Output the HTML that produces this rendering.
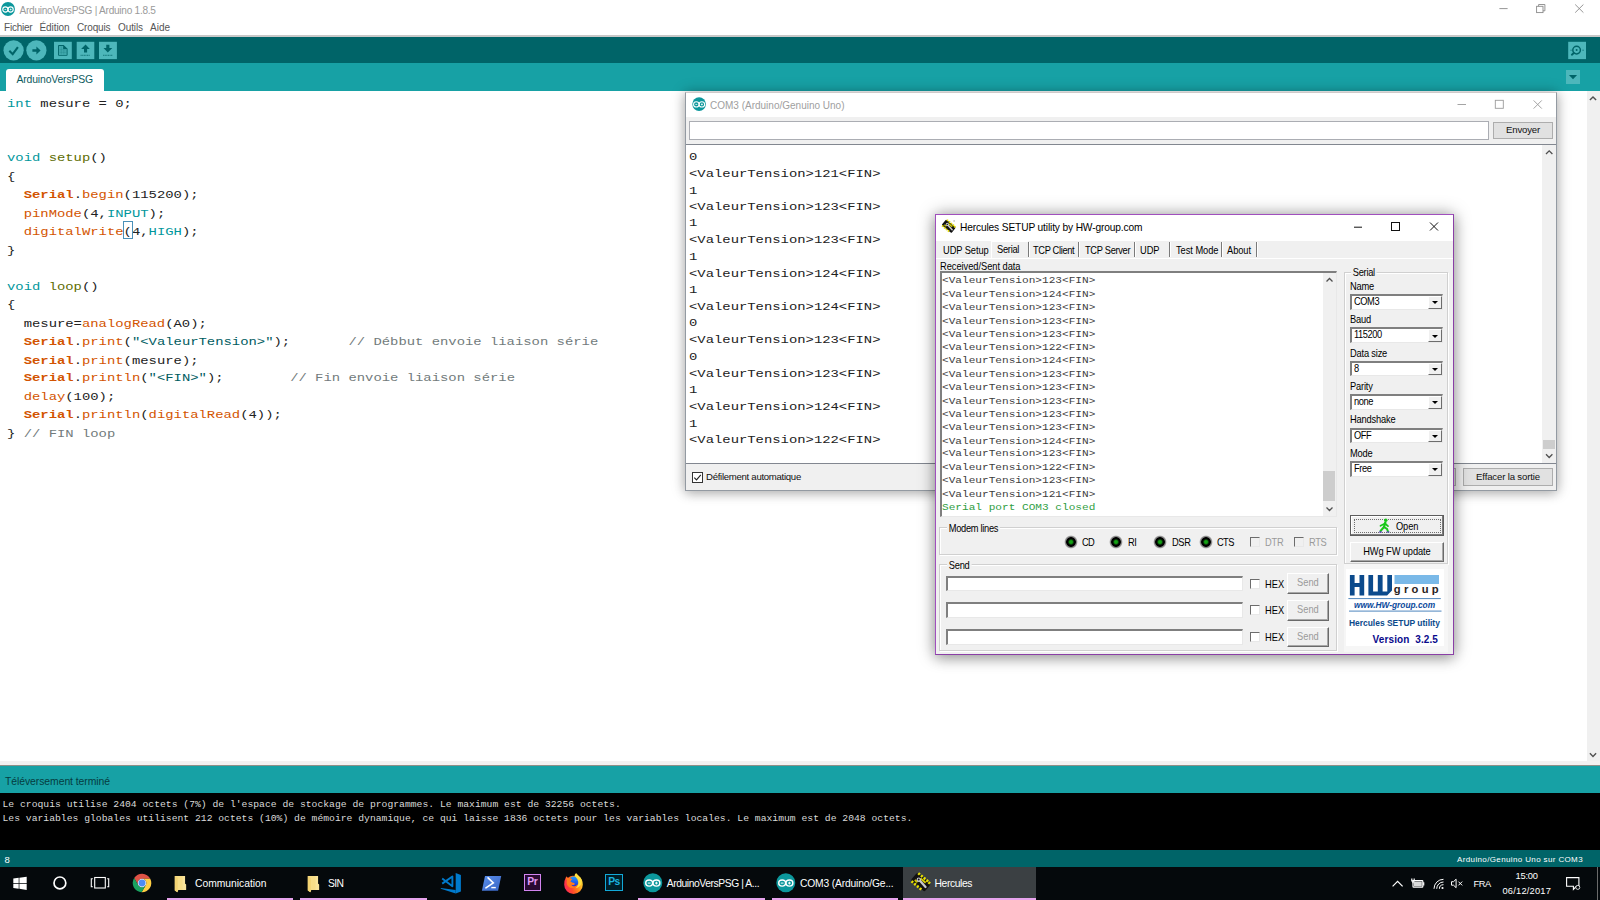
<!DOCTYPE html>
<html lang="fr">
<head>
<meta charset="utf-8">
<title>ArduinoVersPSG | Arduino 1.8.5</title>
<style>
*{box-sizing:border-box;margin:0;padding:0}
html,body{width:1600px;height:900px;overflow:hidden;background:#fff}
body{position:relative;font-family:"Liberation Sans",sans-serif;font-size:12px;color:#000}
.abs{position:absolute}
.ui{font-family:"Liberation Sans",sans-serif}
.mono{font-family:"Liberation Mono",monospace}
/* ---------- Arduino main window ---------- */
#titlebar{left:0;top:0;width:1600px;height:20px;background:#fff}
#titletext{left:19.500px;top:3.500px;font-size:10.100px;line-height:14px;color:#9a9a9a;white-space:nowrap;letter-spacing:-.26px}
#menubar{left:0;top:20px;width:1600px;height:15px;background:#fff;font-size:10px;color:#555;white-space:nowrap}
#menubar span{position:absolute;top:0;line-height:15px}
#menuline{left:0;top:35px;width:1600px;height:2px;background:#c8c8c8}
#toolbar{left:0;top:37px;width:1600px;height:26px;background:#006468}
#tabbar{left:0;top:63px;width:1600px;height:28px;background:#17a1a5}
#tab{left:6px;top:68.500px;width:98px;height:22.500px;background:#fff;border-radius:3px 3px 0 0}
#tabtext{left:16.500px;top:72.500px;letter-spacing:-.15px;font-size:10.400px;line-height:14px;color:#0b5a5e;white-space:nowrap}
#editor{left:0;top:91px;width:1587px;height:674px;background:#fff}
#code{left:7px;top:94.8px;font-size:13.89px;line-height:21.825px;white-space:pre;color:#222;transform:scaleY(.84);transform-origin:0 0}
#vscroll{left:1587px;top:91px;width:13px;height:670px;background:#f0f0f0}
#edline{left:0;top:761px;width:1600px;height:5px;background:#f3f1f1;border-bottom:1px solid #8f8f88}
#status{left:0;top:766px;width:1600px;height:27px;background:#17a1a5}
#statustext{left:5px;top:775px;letter-spacing:-.06px;color:#053c40;font-size:10.400px;line-height:14px;white-space:nowrap}
#console{left:0;top:793px;width:1600px;height:57px;background:#000}
#context{left:2.5px;top:798.600px;color:#dadada;font-size:9.72px;line-height:16.37px;white-space:pre;transform:scaleY(.84);transform-origin:0 0}
#linebar{left:0;top:850px;width:1600px;height:17px;background:#006468;color:#fff;font-size:9px}
#taskbar{left:0;top:867px;width:1600px;height:33px;background:#05090c;color:#fff}
.k{color:#00979c}.f{color:#5e6d03}.o{color:#d35400}.ob{color:#d35400;font-weight:bold}.s{color:#005c5f}.c{color:#727b7c}

/* ---------- COM3 serial monitor ---------- */
#com{left:685px;top:92px;width:872px;height:398.500px;background:#f0f0f0;border:1px solid #939aa2;border-top-color:#cfc9c9;box-shadow:0 0 13px rgba(0,0,0,.27),0 3px 10px rgba(0,0,0,.15)}
#comtitle{left:686px;top:93px;width:870px;height:24px;background:#fff}
#comtitletext{left:710px;top:99px;font-size:10px;line-height:14px;color:#a0a0a0;white-space:nowrap}
#cominput{left:689px;top:121px;width:800px;height:19px;background:#fff;border:1px solid #abadb3}
.wbtn{background:#e1e1e1;border:1px solid #adadad;font-size:9.600px;text-align:center;color:#111;white-space:nowrap}
#comsend{left:1493px;top:122px;width:60px;height:17px;line-height:14px;letter-spacing:-.2px}
#comout{left:686px;top:144px;width:870px;height:320px;background:#fff;border-top:1px solid #828790;border-bottom:1px solid #828790}
#comtext{left:689px;top:148.600px;font-size:13.89px;line-height:19.841px;white-space:pre;color:#222;transform:scaleY(.84);transform-origin:0 0}
#comscroll{left:1542px;top:145px;width:14px;height:318px;background:#f0f0f0}
#comthumb{left:1543px;top:440px;width:12px;height:9px;background:#cdcdcd}
#comcheck{left:692.200px;top:471.500px;width:11px;height:11px;background:#fff;border:1px solid #333}
#comchecklbl{left:706px;top:470.300px;font-size:9.600px;letter-spacing:-.29px;line-height:13px;color:#111;white-space:nowrap}
#comclear{left:1463px;top:468px;width:90px;height:18px;line-height:16px;letter-spacing:-.16px}

/* ---------- Hercules ---------- */
#herc{left:935px;top:214px;width:519px;height:441px;background:#f0f0f0;border:1px solid #a04fbd;border-bottom-color:#8a3fa6;border-right-color:#8a3fa6;box-shadow:0 0 16px rgba(0,0,0,.35),0 4px 12px rgba(0,0,0,.2)}
#hertitle{left:936px;top:215px;width:517px;height:25.500px;background:#fff}
#hertitletext{left:960px;top:220.700px;font-size:10.200px;line-height:14px;color:#000;white-space:nowrap;letter-spacing:-.14px}
.h{font-size:9.300px;line-height:12px;color:#000;white-space:nowrap}
.h:not(.hbtn):not(.combo){font-size:10.200px;transform:translateY(.6px) scaleX(.912);transform-origin:0 50%}
.combo span{font-size:10.200px;transform:scaleX(.912);transform-origin:0 50%}
.bx{display:inline-block;font-size:10.200px;transform:scaleX(.912);transform-origin:50% 50%}
.hg{color:#9a9a9a}
.cl{letter-spacing:-.2px}
.sep{width:2px;height:15px;top:242px;background:#7a7a7a;border-right:1px solid #fff}
.grp{border:1px solid #d0d0d0;box-shadow:inset 1px 1px 0 #fff, 1px 1px 0 #fff}
.grplbl{background:#f0f0f0;padding:0 2px}
.sunk{background:#fff;border-top:2px solid #7f7f7f;border-left:2px solid #7f7f7f;border-right:1px solid #e8e8e8;border-bottom:1px solid #e8e8e8}
.combo{left:1350px;width:93px;height:15.500px}
.combo span{position:absolute;left:1.500px;top:0;line-height:12.500px;letter-spacing:-.45px}
.combo i{position:absolute;right:0;top:0;width:14px;height:12.500px;background:#f0f0f0;border-right:1px solid #6d6d6d;border-bottom:1px solid #6d6d6d;border-left:1px solid #fff;border-top:1px solid #fff}
.combo i:after{content:"";position:absolute;left:2.700px;top:4.300px;border:3.500px solid transparent;border-top:3.800px solid #000;border-bottom:0}
.hbtn{background:#f0f0f0;border-top:1px solid #fff;border-left:1px solid #fff;border-right:1.500px solid #6a6a6a;border-bottom:1.500px solid #6a6a6a;text-align:center;box-shadow:inset -1px -1px 0 #a8a8a8}
.hchk{width:10px;height:10px;background:#fff;border-top:1.500px solid #6c6c6c;border-left:1.500px solid #6c6c6c;border-right:1px solid #e8e8e8;border-bottom:1px solid #e8e8e8}
.led{width:14px;height:14px;border-radius:50%;background:radial-gradient(circle closest-side,#19b019 0,#109010 24%,#0a3a0a 36%,#000 46%,#000 64%,#6e6e6e 72%,#9c9c9c 84%,rgba(200,200,200,.5) 94%,rgba(240,240,240,0) 100%)}
#hertext{left:942px;top:275.300px;font-size:11.11px;line-height:15.873px;white-space:pre;color:#404040;transform:scaleY(.84);transform-origin:0 0}

/* ---------- taskbar ---------- */
.tb{font-size:10.300px;line-height:14px;color:#fff;white-space:nowrap}
.ul{top:898.300px;height:2px;background:#e6a3ec}
</style>
</head>
<body>
<!-- Arduino main window -->
<div id="titlebar" class="abs"></div>
<div id="titletext" class="abs">ArduinoVersPSG | Arduino 1.8.5</div>
<div id="menubar" class="abs"><span style="left:4px;letter-spacing:-.22px">Fichier</span><span style="left:39.500px;letter-spacing:-.08px">Édition</span><span style="left:77px;letter-spacing:-.14px">Croquis</span><span style="left:118px;letter-spacing:-.09px">Outils</span><span style="left:150px">Aide</span></div>
<div id="menuline" class="abs"></div>
<div id="toolbar" class="abs"></div>
<div id="tabbar" class="abs"></div>
<svg class="abs" style="left:0;top:37px" width="130" height="26" viewBox="0 37 130 26">
<g fill="#4db7bb">
<circle cx="13.600" cy="50.300" r="10.100"/><circle cx="36.400" cy="50.300" r="10.100"/>
<rect x="54" y="41.8" width="17.8" height="17.3"/><rect x="76.7" y="41.8" width="17.6" height="17.3"/><rect x="99" y="41.8" width="17.9" height="17.3"/>
</g>
<g fill="none" stroke="#006468">
<path d="M9.300 50.700 L12.700 54.200 L17.900 47.100" stroke-width="2.100"/>
</g>
<g fill="#006468">
<path d="M32.400 49.200 H36.400 V46.400 L40.600 50.500 L36.400 54.600 V51.800 H32.400 Z"/>
<path d="M58.100 45.700 q0-.7.700-.7 H63.600 L67.550 48.700 V55.100 q0 .7-.7.7 H58.800 q-.7 0-.7-.7 Z M59 45.900 V54.900 H66.650 V48.900 H63.400 V45.900 Z" fill-rule="evenodd"/>
<path d="M63.400 45.200 L67.300 48.900 H63.400 Z"/>
<path d="M59 45.900 V54.900 H66.650 V48.900 H63.400 V45.900 Z" opacity=".18"/>
<path d="M59.500 49.700h6.600M59.500 52.300h6.600M61.300 46.500v8M63.800 49.200v5.300" stroke="#006468" stroke-width=".5" opacity=".35" fill="none"/>
<path d="M85.550 44.600 L89.800 48.900 H87.100 V52.400 H84 V48.900 H81.100 Z"/>
<path d="M80.600 55.300 H90" stroke="#006468" stroke-width=".8" stroke-dasharray="1.100 .5" fill="none"/>
<path d="M107.800 52.500 L112.300 48.100 H109.400 V44.700 H106.250 V48.100 H103.500 Z"/>
<path d="M103.100 55.300 H112.800" stroke="#006468" stroke-width=".8" stroke-dasharray="1.100 .5" fill="none"/>
</g>
</svg>
<svg class="abs" style="left:1565px;top:37px" width="35" height="54" viewBox="1565 37 35 54">
<rect x="1568.2" y="41.8" width="17.8" height="17.3" fill="#4db7bb"/>
<rect x="1566" y="70" width="14" height="14" fill="#4db7bb"/>
<path d="M1568.900 74.900 H1577.100 L1573 79.200 Z" fill="#006468"/>
<circle cx="1576.600" cy="50.100" r="3.800" fill="none" stroke="#006468" stroke-width="1.500"/>
<circle cx="1576.600" cy="50.100" r="1" fill="#006468"/>
<path d="M1573.800 53.100 L1571.900 54.700" stroke="#006468" stroke-width="2" stroke-linecap="round"/>
<path d="M1570.400 50.200h1.400M1582.300 50.200h1.600" stroke="#006468" stroke-width=".7"/>
</svg>
<div id="tab" class="abs"></div><div id="tabtext" class="abs">ArduinoVersPSG</div>
<div id="editor" class="abs"></div>
<div id="code" class="abs mono"><span class="k">int</span> mesure = 0;


<span class="k">void</span> <span class="f">setup</span>()
{
  <span class="ob">Serial</span>.<span class="o">begin</span>(115200);
  <span class="o">pinMode</span>(4,<span class="k">INPUT</span>);
  <span class="o">digitalWrite</span>(4,<span class="k">HIGH</span>);
}

<span class="k">void</span> <span class="f">loop</span>()
{
  mesure=<span class="o">analogRead</span>(A0);
  <span class="ob">Serial</span>.<span class="o">print</span>(<span class="s">"&lt;ValeurTension&gt;"</span>);       <span class="c">// Débbut envoie liaison série</span>
  <span class="ob">Serial</span>.<span class="o">print</span>(mesure);
  <span class="ob">Serial</span>.<span class="o">println</span>(<span class="s">"&lt;FIN&gt;"</span>);        <span class="c">// Fin envoie liaison série</span>
  <span class="o">delay</span>(100);
  <span class="ob">Serial</span>.<span class="o">println</span>(<span class="o">digitalRead</span>(4));
} <span class="c">// FIN loop</span></div>
<div class="abs" style="left:123px;top:221px;width:9.600px;height:18px;border:1px solid #4a90b8"></div>
<div id="vscroll" class="abs"></div>
<svg class="abs" style="left:1.100px;top:1.950px" width="14" height="14" viewBox="0 0 20 20"><circle cx="10" cy="10" r="9.900" fill="#0c979c"/><g fill="none" stroke="#fff" stroke-width="1.600"><ellipse cx="6.250" cy="10.700" rx="3.700" ry="3.700"/><ellipse cx="13.750" cy="10.700" rx="3.700" ry="3.700"/></g><path d="M5 10.700h2.500M12.500 10.700h2.500M13.750 9.450v2.500" stroke="#fff" stroke-width="1"/></svg>
<svg class="abs" style="left:1490px;top:0" width="110" height="18" viewBox="1490 0 110 18"><g stroke="#8a8a8a" stroke-width="0.900" fill="none"><path d="M1499.400 8.600h8.200"/><rect x="1536.600" y="6.300" width="6.400" height="6.300"/><path d="M1538.600 6.300v-1.800h6.300v6.300h-1.900"/><path d="M1575.200 4.500l8.200 8.100M1583.400 4.500l-8.200 8.100"/></g></svg>
<svg class="abs" style="left:1587px;top:91px" width="13" height="674" viewBox="0 0 13 674"><g fill="none" stroke="#505050" stroke-width="1.400"><path d="M2.900 9l3.100-3.100L9.100 9"/><path d="M2.900 662.300l3.100 3.100L9.100 662.300"/></g></svg>
<div id="edline" class="abs"></div>
<div id="status" class="abs"></div><div id="statustext" class="abs">Téléversement terminé</div>
<div id="console" class="abs"></div>
<div id="context" class="abs mono">Le croquis utilise 2404 octets (7%) de l'espace de stockage de programmes. Le maximum est de 32256 octets.
Les variables globales utilisent 212 octets (10%) de mémoire dynamique, ce qui laisse 1836 octets pour les variables locales. Le maximum est de 2048 octets.</div>
<div id="linebar" class="abs"><span class="abs" style="left:4.500px;top:4.200px;font-size:9.500px;line-height:11px">8</span><span class="abs" style="left:1457px;top:3.700px;font-size:8px;line-height:11px;letter-spacing:.37px;white-space:nowrap">Arduino/Genuino Uno sur COM3</span></div>
<div id="taskbar" class="abs"></div>
<div class="abs" style="left:903px;top:867px;width:133px;height:31.500px;background:#3b4043"></div>
<div class="abs ul" style="left:167px;width:126px"></div>
<div class="abs ul" style="left:300px;width:127px"></div>
<div class="abs ul" style="left:638.2px;width:126.6px"></div>
<div class="abs ul" style="left:771.6px;width:126.8px"></div>
<div class="abs ul" style="left:902.9px;width:133.1px"></div>
<svg class="abs" style="left:13px;top:876.0px" width="15" height="15" viewBox="0 0 15 15"><g fill="#fff"><path d="M.3 2.600l5.400-.75v5.100H.3zM6.400 1.750L13.700.7v6.250H6.400zM.3 7.650h5.400v5.100L.3 12zM6.400 7.650h7.300v6.250l-7.300-1.050z"/></g></svg>
<svg class="abs" style="left:52px;top:875.0px" width="16" height="16" viewBox="0 0 16 16"><circle cx="7.900" cy="7.900" r="5.900" fill="none" stroke="#fff" stroke-width="1.700"/></svg>
<svg class="abs" style="left:90px;top:876.0px" width="20" height="14" viewBox="0 0 20 14"><g fill="none" stroke="#fff" stroke-width="1.100"><rect x="4.700" y="1.500" width="10.600" height="10.500"/><path d="M2.800 2.800H1.300v8h1.500M17.200 2.800h1.500v8h-1.500"/></g></svg>
<svg class="abs" style="left:132px;top:873.100px" width="20" height="20" viewBox="-10 -10 20 20"><path d="M0 -4.300L8.246 -4.300A9.300 9.300 0 0 0 -7.847 -4.991L-3.724 2.150A4.300 4.300 0 0 1 0 -4.300z" fill="#de5246"/><path d="M3.724 2.150L-.399 9.291A9.300 9.300 0 0 0 8.246 -4.300L0 -4.300A4.300 4.300 0 0 1 3.724 2.150z" fill="#ffce44"/><path d="M-3.724 2.150L-7.847 -4.991A9.300 9.300 0 0 0 -.399 9.291L3.724 2.150A4.300 4.300 0 0 1 -3.724 2.150z" fill="#1aa260"/><circle r="4.300" fill="#f1f1f1"/><circle r="3.450" fill="#4c8bf5"/></svg>
<svg class="abs" style="left:172px;top:874px" width="16" height="21" viewBox="172 874 16 21"><path d="M174.800 876.100H185.050V883.700L186.100 884.500V889.900H178.300L177.400 892.300L174.800 890.600z" fill="#f8de88"/><path d="M174.800 876.100L177.700 877.700V889.900L177.400 892.300L174.800 890.600z" fill="#f3d373"/><path d="M182.500 876.100H185.050V883.700L186.100 884.500V889.900H182.500z" fill="#fbe7a2" opacity=".7"/></svg>
<svg class="abs" style="left:305.2px;top:874px" width="16" height="21" viewBox="172 874 16 21"><path d="M174.800 876.100H185.050V883.700L186.100 884.500V889.900H178.300L177.400 892.300L174.800 890.600z" fill="#f8de88"/><path d="M174.800 876.100L177.700 877.700V889.900L177.400 892.300L174.800 890.600z" fill="#f3d373"/><path d="M182.500 876.100H185.050V883.700L186.100 884.500V889.900H182.500z" fill="#fbe7a2" opacity=".7"/></svg>
<div id="tb1" class="abs tb" style="left:195px;top:877.1px">Communication</div>
<div id="tb2" class="abs tb" style="letter-spacing:-0.66px;left:328px;top:877.1px">SIN</div>
<svg class="abs" style="left:438px;top:871px" width="26" height="25" viewBox="438 871 26 25"><g fill="#007acc"><path d="M455.700 873L460.900 875V891.400L455.700 893.600z"/><path d="M440.800 888.100L455.700 890V893.600L440.800 888.800z"/></g><g fill="none" stroke="#007acc" stroke-width="1.900" stroke-linejoin="round"><path d="M442.200 878.600L452.400 886.200V876.500L442.200 883.600"/></g></svg>
<svg class="abs" style="left:480px;top:874px" width="24" height="19" viewBox="480 874 24 19"><defs><linearGradient id="psg" x1="0" y1="0" x2="1" y2="1"><stop offset="0" stop-color="#5b90ec"/><stop offset="1" stop-color="#3763c4"/></linearGradient></defs><path d="M485 876.100H501.200L498.100 890.750H481.900z" fill="url(#psg)"/><path d="M488.050 877.900L493.300 882.900L485.900 887.900" fill="none" stroke="#fff" stroke-width="1.600" stroke-linecap="round"/><path d="M491.300 887.600h4.500" stroke="#fff" stroke-width="1.400"/></svg>
<div class="abs" style="left:523.500px;top:874.0px;width:17.700px;height:16.600px;background:#2a0a33;border:1.500px solid #d284f0"></div>
<div class="abs" style="left:523.500px;top:875.5px;width:17.700px;text-align:center;font-size:10.300px;line-height:14px;color:#e29af8;letter-spacing:-.3px;font-weight:bold;margin-top:-.5px">Pr</div>
<svg class="abs" style="left:562.800px;top:872.600px" width="21" height="21" viewBox="-10.500 -10.500 21 21"><defs><linearGradient id="ffg" x1="0" y1=".6" x2="1" y2=".2"><stop offset="0" stop-color="#ff2a55"/><stop offset=".3" stop-color="#ff4a2a"/><stop offset=".6" stop-color="#ff8a1a"/><stop offset=".85" stop-color="#ffc82e"/><stop offset="1" stop-color="#ffe84a"/></linearGradient><linearGradient id="ffb" x1="0" y1="0" x2="0" y2="1"><stop offset="0" stop-color="#1e9bff"/><stop offset=".6" stop-color="#1a5cf0"/><stop offset="1" stop-color="#3a2ec0"/></linearGradient></defs><path d="M-7.500 -6.500Q-9.600 -2.500 -9.300 1.200A9.300 9.300 0 0 0 9.300 1.200Q9.300 -4.500 5.500 -7.300Q3.500 -9 2.600 -10.200Q1 -8.800 1.200 -7.600Q-2.500 -8.500 -5.500 -5.800Q-6.800 -6 -7.500 -7.500z" fill="url(#ffg)"/><circle cx=".3" cy="-2" r="5" fill="url(#ffb)"/><path d="M2.600 -10.200Q1 -8.800 1.200 -7.600Q4.300 -5 4.800 -1.500Q5.200 2.500 2 4.800Q6 4 7.800 .5Q9 -4.500 5.500 -7.300Q3.500 -9 2.600 -10.200z" fill="#ffe040"/><path d="M-7.500 -6.500Q-5.500 -5 -3.800 -5.600Q-2 -5 -1.200 -4.200Q-2.600 -3.200 -3 -2Q-1.500 -.6 .8 -.6Q1.800 .4 .6 1.400Q-.8 1.900 -2.300 1.200Q-1 3.400 1.600 3.200Q-1.500 5.600 -4.600 3.600Q-7.500 1 -6.600 -3Q-7.500 -4.500 -7.500 -6.500z" fill="#ff7a1e"/></svg>
<div class="abs" style="left:605.300px;top:874.0px;width:17.500px;height:16.600px;background:#001e28;border:1.500px solid #12a9d8"></div>
<div class="abs" style="left:605.300px;top:875.5px;width:17.500px;text-align:center;font-size:10.300px;line-height:14px;color:#1bb4e0;letter-spacing:-.4px;font-weight:bold;margin-top:-.5px">Ps</div>
<svg class="abs" style="left:643.2px;top:873.2px" width="19.6" height="19.6" viewBox="0 0 20 20"><circle cx="10" cy="10" r="9.700" fill="#0c979c"/><g fill="none" stroke="#fff" stroke-width="1.500"><ellipse cx="6.300" cy="10.300" rx="3.500" ry="3.100"/><ellipse cx="13.700" cy="10.300" rx="3.500" ry="3.100"/></g><path d="M4.900 10.300h2.800M12.300 10.300h2.800M13.700 8.900v2.800" stroke="#fff" stroke-width="1"/></svg>
<svg class="abs" style="left:776.4px;top:873.0px" width="19.6" height="19.6" viewBox="0 0 20 20"><circle cx="10" cy="10" r="9.700" fill="#0c979c"/><g fill="none" stroke="#fff" stroke-width="1.500"><ellipse cx="6.300" cy="10.300" rx="3.500" ry="3.100"/><ellipse cx="13.700" cy="10.300" rx="3.500" ry="3.100"/></g><path d="M4.900 10.300h2.800M12.300 10.300h2.800M13.700 8.900v2.800" stroke="#fff" stroke-width="1"/></svg>
<div id="tb3" class="abs tb" style="letter-spacing:-0.42px;left:666.800px;top:877.1px">ArduinoVersPSG | A...</div>
<div id="tb4" class="abs tb" style="letter-spacing:-0.17px;left:800px;top:877.1px">COM3 (Arduino/Ge...</div>
<svg class="abs" style="left:910.300px;top:872.300px" width="21.500" height="21.500" viewBox="940 218 18 18"><g transform="rotate(40 949 226.500)"><rect x="941.500" y="222.300" width="15" height="8.400" rx="1.500" fill="#111"/><g fill="#e8e000"><rect x="942.600" y="221" width="1.700" height="2.200"/><rect x="945.600" y="221" width="1.700" height="2.200"/><rect x="948.600" y="221" width="1.700" height="2.200"/><rect x="951.600" y="221" width="1.700" height="2.200"/><rect x="954" y="221.300" width="1.700" height="2.200"/><rect x="942.600" y="229.800" width="1.700" height="2.200"/><rect x="945.600" y="229.800" width="1.700" height="2.200"/><rect x="948.600" y="229.800" width="1.700" height="2.200"/><rect x="951.600" y="229.800" width="1.700" height="2.200"/><rect x="947" y="223.500" width="5.500" height="1.600" opacity=".9"/><rect x="944" y="227.600" width="3" height="1.500" opacity=".9"/></g></g><path d="M948 225l5 5.500" stroke="#c8c8c8" stroke-width="1.900" stroke-linecap="round"/><circle cx="947.400" cy="224.400" r="1.900" fill="#c8c8c8"/><circle cx="947.300" cy="224.300" r=".8" fill="#111"/></svg>
<div id="tb5" class="abs tb" style="letter-spacing:-0.39px;left:934.500px;top:877.1px">Hercules</div>
<svg class="abs" style="left:1388px;top:874.0px" width="200" height="20" viewBox="1388 874 200 20"><g fill="none" stroke="#fff" stroke-width="1.200"><path d="M1392.600 886.300l5-5 5 5"/><rect x="1413" y="880.600" width="9.800" height="6.600" rx=".6"/><path d="M1423.700 882.300v3.200"/><path d="M1411.800 878.600v2.200h2.400v-2.200M1413 880.800v2.500"/><path d="M1434 888.800a9.500 9.500 0 0 1 9.500-9.500M1436.700 888.800a6.800 6.800 0 0 1 6.800-6.800M1439.400 888.800a4.100 4.100 0 0 1 4.100-4.100" stroke-width="1"/><path d="M1451.500 881.700h2l2.600-2.500v8.500l-2.600-2.500h-2z" stroke-width="1"/><path d="M1458.400 881.600l3.800 3.800M1462.200 881.600l-3.800 3.800" stroke-width="1"/><path d="M1566.600 877.600h12.300v8.700h-2.500v0l-3 3v-3h-6.800z" stroke-width="1.100"/></g><circle cx="1442.500" cy="888" r="1.100" fill="#fff"/><rect x="1414" y="881.600" width="7.800" height="4.600" fill="#fff" opacity=".85"/><circle cx="1577.800" cy="887.400" r="2" fill="#05090c" stroke="#fff" stroke-width=".8"/></svg>
<div id="tb6" class="abs tb" style="letter-spacing:-0.44px;font-size:9.300px;left:1473.400px;top:876.5px">FRA</div>
<div id="tb7" class="abs tb" style="letter-spacing:-0.22px;font-size:9.300px;left:1515.600px;top:869px">15:00</div>
<div id="tb8" class="abs tb" style="letter-spacing:0.2px;font-size:9.300px;left:1502.500px;top:884.4px">06/12/2017</div>
<div class="abs" style="left:1596.500px;top:867px;width:1px;height:33px;background:#6a6a6a"></div>
<!-- COM3 window -->
<div id="com" class="abs"></div>
<div id="comtitle" class="abs"></div>
<svg class="abs" style="left:692px;top:96.900px" width="14.200" height="14.200" viewBox="0 0 14 14"><circle cx="7" cy="7" r="6.700" fill="#0c979c"/><g fill="none" stroke="#fff" stroke-width="1"><ellipse cx="4.250" cy="7.300" rx="2.700" ry="2.600"/><ellipse cx="9.750" cy="7.300" rx="2.700" ry="2.600"/></g><path d="M3.300 7.300h1.900M8.800 7.300h1.900M9.750 6.350v1.900" stroke="#fff" stroke-width=".8"/></svg>
<div id="comtitletext" class="abs">COM3 (Arduino/Genuino Uno)</div>
<svg class="abs" style="left:1450px;top:96px" width="100" height="16" viewBox="1450 96 100 16"><g stroke="#9a9a9a" stroke-width="0.9" fill="none"><path d="M1457.5 104.5h8.5"/><rect x="1495.3" y="100.3" width="8" height="8"/><path d="M1533.6 100.4l8.2 8.2M1541.8 100.4l-8.2 8.2"/></g></svg>
<div id="cominput" class="abs"></div>
<div id="comsend" class="abs wbtn">Envoyer</div>
<div id="comout" class="abs"></div>
<div id="comtext" class="abs mono">0
&lt;ValeurTension&gt;121&lt;FIN&gt;
1
&lt;ValeurTension&gt;123&lt;FIN&gt;
1
&lt;ValeurTension&gt;123&lt;FIN&gt;
1
&lt;ValeurTension&gt;124&lt;FIN&gt;
1
&lt;ValeurTension&gt;124&lt;FIN&gt;
0
&lt;ValeurTension&gt;123&lt;FIN&gt;
0
&lt;ValeurTension&gt;123&lt;FIN&gt;
1
&lt;ValeurTension&gt;124&lt;FIN&gt;
1
&lt;ValeurTension&gt;122&lt;FIN&gt;</div>
<div id="comscroll" class="abs"></div>
<div id="comthumb" class="abs"></div>
<svg class="abs" style="left:1542px;top:145px" width="14" height="318" viewBox="0 0 14 318"><g fill="none" stroke="#505050" stroke-width="1.3"><path d="M4 9l3.2-3.2L10.400 9"/><path d="M4 309.300l3.200 3.200L10.400 309.300"/></g></svg>
<div id="comcheck" class="abs"></div>
<svg class="abs" style="left:692.200px;top:471.500px" width="11" height="11" viewBox="0 0 11 11"><path d="M2.300 5.600l2.200 2.300L8.800 2.800" fill="none" stroke="#222" stroke-width="1.1"/></svg>
<div id="comchecklbl" class="abs">Défilement automatique</div>
<div class="abs" style="left:1400px;top:468px;width:56px;height:17.500px;background:#e1e1e1;border:1px solid #adadad"></div>
<div id="comclear" class="abs wbtn">Effacer la sortie</div>

<!-- Hercules window -->
<div id="herc" class="abs"></div>
<div id="hertitle" class="abs"></div>
<svg class="abs" style="left:941.300px;top:218.900px" width="15.400" height="15.400" viewBox="940 218 18 18"><g transform="rotate(40 949 226.500)"><rect x="941.500" y="222.300" width="15" height="8.400" rx="1.500" fill="#111"/><g fill="#e8e000"><rect x="942.600" y="221" width="1.700" height="2.200"/><rect x="945.600" y="221" width="1.700" height="2.200"/><rect x="948.600" y="221" width="1.700" height="2.200"/><rect x="951.600" y="221" width="1.700" height="2.200"/><rect x="954" y="221.300" width="1.700" height="2.200"/><rect x="942.600" y="229.800" width="1.700" height="2.200"/><rect x="945.600" y="229.800" width="1.700" height="2.200"/><rect x="948.600" y="229.800" width="1.700" height="2.200"/><rect x="951.600" y="229.800" width="1.700" height="2.200"/><rect x="947" y="223.500" width="5.500" height="1.600" opacity=".9"/><rect x="944" y="227.600" width="3" height="1.500" opacity=".9"/></g></g><path d="M948 225l5 5.500" stroke="#c8c8c8" stroke-width="1.900" stroke-linecap="round"/><circle cx="947.400" cy="224.400" r="1.900" fill="#c8c8c8"/><circle cx="947.300" cy="224.300" r=".8" fill="#111"/><rect x="954.800" y="219.800" width="1" height="1" fill="#333"/></svg>
<div id="hertitletext" class="abs">Hercules SETUP utility by HW-group.com</div>
<svg class="abs" style="left:1345px;top:218px" width="105" height="18" viewBox="1345 218 105 18"><g stroke="#111" stroke-width="1" fill="none"><path d="M1354 227.200h8"/><rect x="1391.500" y="222.500" width="8" height="8"/><path d="M1430 222.500l8 8M1438 222.500l-8 8"/></g></svg>
<div id="t1" class="abs h" style="letter-spacing:-0.09px;left:942.5px;top:244.3px">UDP Setup</div>
<div id="t2" class="abs h" style="letter-spacing:-0.3px;left:997px;top:243px">Serial</div>
<div id="t3" class="abs h" style="letter-spacing:-0.38px;left:1033px;top:244.3px">TCP Client</div>
<div id="t4" class="abs h" style="letter-spacing:-0.34px;left:1085px;top:244.3px">TCP Server</div>
<div id="t5" class="abs h" style="letter-spacing:-0.05px;left:1140px;top:244.3px">UDP</div>
<div id="t6" class="abs h" style="letter-spacing:-0.05px;left:1175.5px;top:244.3px">Test Mode</div>
<div id="t7" class="abs h" style="letter-spacing:-0.06px;left:1227px;top:244.3px">About</div>
<div class="abs sep" style="left:1027.5px"></div>
<div class="abs sep" style="left:1077.5px"></div>
<div class="abs sep" style="left:1133.9px"></div>
<div class="abs sep" style="left:1168.9px"></div>
<div class="abs sep" style="left:1221.4px"></div>
<div class="abs sep" style="left:1256.4px"></div>
<div class="abs" style="left:991px;top:241px;width:37px;height:17px;border-top:1px solid #fff;border-left:1px solid #fff"></div>
<div class="abs" style="left:936px;top:257.500px;width:517px;height:1px;background:#fff"></div>
<div id="rsd" class="abs h" style="letter-spacing:-0.04px;left:939.500px;top:259.500px">Received/Sent data</div>
<div class="abs sunk" style="left:940px;top:271px;width:397px;height:246px"></div>
<div id="hertext" class="abs mono">&lt;ValeurTension&gt;123&lt;FIN&gt;
&lt;ValeurTension&gt;124&lt;FIN&gt;
&lt;ValeurTension&gt;123&lt;FIN&gt;
&lt;ValeurTension&gt;123&lt;FIN&gt;
&lt;ValeurTension&gt;123&lt;FIN&gt;
&lt;ValeurTension&gt;122&lt;FIN&gt;
&lt;ValeurTension&gt;124&lt;FIN&gt;
&lt;ValeurTension&gt;123&lt;FIN&gt;
&lt;ValeurTension&gt;123&lt;FIN&gt;
&lt;ValeurTension&gt;123&lt;FIN&gt;
&lt;ValeurTension&gt;123&lt;FIN&gt;
&lt;ValeurTension&gt;123&lt;FIN&gt;
&lt;ValeurTension&gt;124&lt;FIN&gt;
&lt;ValeurTension&gt;123&lt;FIN&gt;
&lt;ValeurTension&gt;122&lt;FIN&gt;
&lt;ValeurTension&gt;123&lt;FIN&gt;
&lt;ValeurTension&gt;121&lt;FIN&gt;
<span style="color:#2f9e3f">Serial port COM3 closed</span></div>
<div class="abs" style="left:1322.500px;top:273px;width:13px;height:243px;background:#f0f0f0"></div>
<div class="abs" style="left:1323px;top:471px;width:11.500px;height:29.500px;background:#cdcdcd"></div>
<svg class="abs" style="left:1322.500px;top:273px" width="13" height="243" viewBox="0 0 13 243"><g fill="none" stroke="#505050" stroke-width="1.300"><path d="M3.500 8.500l3-3 3 3"/><path d="M3.500 234.500l3 3 3-3"/></g></svg>
<div class="abs grp" style="left:939px;top:526.700px;width:397.600px;height:28.500px"></div>
<div id="ml" class="abs h grplbl" style="letter-spacing:-0.34px;left:946.500px;top:522.100px">Modem lines</div>
<div class="abs led" style="left:1064.2px;top:535px"></div>
<div id="l1" class="abs h" style="letter-spacing:-0.87px;left:1082px;top:536px">CD</div>
<div class="abs led" style="left:1109.4px;top:535px"></div>
<div id="l2" class="abs h" style="letter-spacing:-0.4px;left:1127.5px;top:536px">RI</div>
<div class="abs led" style="left:1153.1px;top:535px"></div>
<div id="l3" class="abs h" style="letter-spacing:-0.38px;left:1172px;top:536px">DSR</div>
<div class="abs led" style="left:1198.75px;top:535px"></div>
<div id="l4" class="abs h" style="letter-spacing:-0.67px;left:1217px;top:536px">CTS</div>
<div class="abs hchk" style="left:1250.3px;top:537px;background:#f0f0f0"></div>
<div id="l5" class="abs h hg" style="letter-spacing:-0.24px;left:1265.4px;top:536px">DTR</div>
<div class="abs hchk" style="left:1293.5px;top:537px;background:#f0f0f0"></div>
<div id="l6" class="abs h hg" style="letter-spacing:-0.38px;left:1308.7px;top:536px">RTS</div>
<div class="abs grp" style="left:939px;top:564px;width:397.600px;height:87px"></div>
<div id="sl" class="abs h grplbl" style="letter-spacing:-0.3px;left:946.500px;top:559.300px">Send</div>
<div class="abs sunk" style="left:946.400px;top:575.5px;width:296.600px;height:15.500px"></div>
<div class="abs hchk" style="left:1250.300px;top:578.5px"></div>
<div class="abs h hx" style="left:1265px;top:577.5px">HEX</div>
<div class="abs h hg hbtn sb" style="left:1287.300px;top:573.3px;width:42px;height:20.600px;line-height:17px"><span class="bx">Send</span></div>
<div class="abs sunk" style="left:946.400px;top:602.2px;width:296.600px;height:15.500px"></div>
<div class="abs hchk" style="left:1250.300px;top:605.2px"></div>
<div class="abs h hx" style="left:1265px;top:604.2px">HEX</div>
<div class="abs h hg hbtn sb" style="left:1287.300px;top:600.0px;width:42px;height:20.600px;line-height:17px"><span class="bx">Send</span></div>
<div class="abs sunk" style="left:946.400px;top:629px;width:296.600px;height:15.500px"></div>
<div class="abs hchk" style="left:1250.300px;top:632px"></div>
<div class="abs h hx" style="left:1265px;top:631px">HEX</div>
<div class="abs h hg hbtn sb" style="left:1287.300px;top:626.8px;width:42px;height:20.600px;line-height:17px"><span class="bx">Send</span></div>
<div class="abs grp" style="left:1343.500px;top:272px;width:104.500px;height:292px"></div>
<div id="srl" class="abs h grplbl" style="letter-spacing:-0.33px;left:1350.700px;top:266px">Serial</div>
<div class="abs h cl" style="left:1350px;top:279.7px">Name</div>
<div class="abs sunk combo h" style="top:294.0px"><span>COM3</span><i></i></div>
<div class="abs h cl" style="left:1350px;top:313.1px">Baud</div>
<div class="abs sunk combo h" style="top:327.4px"><span>115200</span><i></i></div>
<div class="abs h cl" style="left:1350px;top:346.5px">Data size</div>
<div class="abs sunk combo h" style="top:360.8px"><span>8</span><i></i></div>
<div class="abs h cl" style="left:1350px;top:379.9px">Parity</div>
<div class="abs sunk combo h" style="top:394.2px"><span>none</span><i></i></div>
<div class="abs h cl" style="left:1350px;top:413.3px">Handshake</div>
<div class="abs sunk combo h" style="top:427.6px"><span>OFF</span><i></i></div>
<div class="abs h cl" style="left:1350px;top:446.7px">Mode</div>
<div class="abs sunk combo h" style="top:461.0px"><span>Free</span><i></i></div>
<div class="abs hbtn" style="left:1350.400px;top:515.300px;width:93.500px;height:20.500px;border:1px solid #5c5c5c;box-shadow:inset -1px -1px 0 #7a7a7a, inset 1px 1px 0 #fff"></div>
<div class="abs" style="left:1353.500px;top:518.500px;width:87px;height:14px;border:1px dotted #6e6e6e"></div>
<svg class="abs" style="left:1377px;top:518px" width="14" height="15" viewBox="0 0 14 15"><g fill="none" stroke="#19c819" stroke-width="2.300" stroke-linecap="round"><path d="M8.300 4.500L7 9"/><path d="M7 9L3.500 13M7 9L10 11l1 2.500" stroke-width="2"/><path d="M8 5.500L3.500 7.800M8 5.500l3 2.700" stroke-width="1.700"/></g><circle cx="8.800" cy="2.300" r="1.700" fill="#19c819"/><path d="M2 14h3M9.500 14h3" stroke="#5a2fd0" stroke-width="1"/></svg>
<div id="opn" class="abs h" style="letter-spacing:-0.14px;left:1396px;top:520px">Open</div>
<div id="fwu" class="abs h hbtn" style="letter-spacing:-0.11px;left:1350.400px;top:541.600px;width:93.500px;height:20.600px;line-height:18px"><span class="bx">HWg FW update</span></div>
<div class="abs" style="left:1343.500px;top:564px;width:104.500px;height:87.500px;background:#f6f6f6"></div>
<div class="abs" style="left:1346px;top:569px;width:98px;height:76.500px;background:#fff"></div>
<svg class="abs" style="left:1346px;top:569px" width="98" height="77" viewBox="1346 569 98 77"><rect x="1394.500" y="575" width="44.500" height="9" fill="#7ab9e8"/><g fill="#0b4a8c"><path d="M1349.900 575h4.700v7.900h4.900v-7.900h4.700v20.400h-4.700v-8.400h-4.900v8.400h-4.700z"/><path d="M1368.400 575h4.700v16.400h4.700v-16.400h4.800v16.400h4.700v-16.400h4.700v15.400l-4.900 5h-18.700z"/></g><text x="1393.800" y="593.200" font-family="Liberation Sans, sans-serif" font-weight="bold" font-size="11.200" letter-spacing="3.300" fill="#2a2322">group</text><path d="M1348.400 598.600h92.400M1349 611.100h92.500" stroke="#3a78b5" stroke-width=".9"/><text x="1354.100" y="607.500" font-family="Liberation Sans, sans-serif" font-weight="bold" font-style="italic" font-size="8.600" fill="#0b4a9c" textLength="81" lengthAdjust="spacingAndGlyphs">www.HW-group.com</text><text x="1348.900" y="625.700" font-family="Liberation Sans, sans-serif" font-weight="bold" font-size="8.400" fill="#0b4a8c" textLength="91" lengthAdjust="spacingAndGlyphs">Hercules SETUP utility</text><text x="1372.600" y="643" font-family="Liberation Sans, sans-serif" font-weight="bold" font-size="10" fill="#0a0a8c" xml:space="preserve" textLength="65.300" lengthAdjust="spacing">Version  3.2.5</text></svg>

</body>
</html>
